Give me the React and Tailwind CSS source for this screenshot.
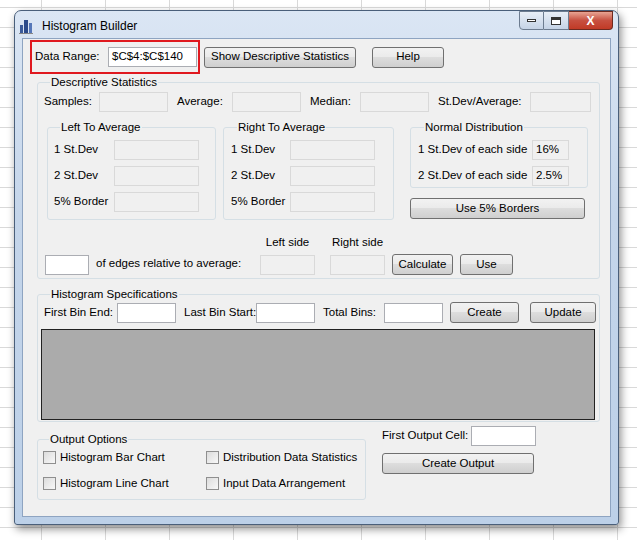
import React from 'react'

const font = "font-[Liberation_Sans,Arial,sans-serif] text-[11.5px] text-black whitespace-nowrap"

function Box({ w, value, white }) {
  return (
    <div className={`h-[20px] ${w} shrink-0 border ${white ? 'bg-white border-[#abadb3]' : 'bg-[#f0f0f0] border-[#d9d9d9]'} px-[3px] flex items-center`}>
      {value}
    </div>
  )
}

function Btn({ w, children }) {
  return (
    <div className={`h-[21px] ${w} border border-[#707070] rounded-[3px] bg-[linear-gradient(#f2f2f2,#ebebeb_45%,#dddddd_50%,#cfcfcf)] flex items-center justify-center`}>
      {children}
    </div>
  )
}

function Group({ title, className, children }) {
  return (
    <fieldset className={`border border-[#d5dfe5] rounded-[3px] ${className}`}>
      <legend className="ml-[6px] px-[1px] leading-[14px]">{title}</legend>
      {children}
    </fieldset>
  )
}

function Row({ label, value, lw = 'w-[60px]', bw = 'w-[85px]' }) {
  return (
    <div className="flex items-center">
      <span className={lw}>{label}</span>
      <Box w={bw} value={value} />
    </div>
  )
}

function Check({ label }) {
  return (
    <div className="flex items-center gap-[4px]">
      <div className="w-[13px] h-[13px] border border-[#8f8f8f] bg-[linear-gradient(135deg,#dcdcdc,#f8f8f8)]" />
      <span>{label}</span>
    </div>
  )
}

export default function App() {
  return (
    <div className={`w-[637px] h-[540px] overflow-hidden bg-white bg-[linear-gradient(to_right,#d9d9d9_1px,transparent_1px),linear-gradient(to_bottom,#d9d9d9_1px,transparent_1px)] bg-[size:64px_20px] bg-[position:41px_7px] pt-[10px] pl-[14px] ${font}`}>
      <div className="w-[605px] h-[515px] rounded-t-[7px] rounded-b-[3px] border border-[#4a5f7a] bg-[linear-gradient(#dbe6f4,#c4d5ea_40%,#bcd0e8)] shadow-[2px_4px_8px_rgba(0,0,0,0.45)] flex flex-col">
        {/* title bar */}
        <div className="h-[27px] flex items-start">
          <div className="flex items-center mt-[6px] ml-[4px] gap-[9px]">
            <svg width="14" height="16" viewBox="0 0 14 16">
              <rect x="1" y="7" width="3" height="9" fill="#3a5a9a" />
              <rect x="5" y="2" width="4" height="14" fill="#2b4a8a" />
              <rect x="10" y="5" width="3" height="11" fill="#5577b8" />
              <rect x="0" y="15" width="14" height="1" fill="#888" />
            </svg>
            <span className="text-[12px]">Histogram Builder</span>
          </div>
          <div className="ml-auto mr-[5px] flex">
            <div className="w-[25px] h-[19px] border border-[#6d7c90] rounded-bl-[4px] bg-[linear-gradient(#e8eef7,#c5d3e6)] flex items-center justify-center">
              <div className="w-[9px] h-[3px] border border-[#333] bg-white" />
            </div>
            <div className="w-[25px] h-[19px] border-y border-r border-[#6d7c90] bg-[linear-gradient(#e8eef7,#c5d3e6)] flex items-center justify-center">
              <div className="w-[10px] h-[8px] border border-[#333] border-t-[3px] bg-white" />
            </div>
            <div className="w-[44px] h-[19px] border-y border-r border-[#6d2a20] rounded-br-[4px] bg-[linear-gradient(#e8a493,#c75040_50%,#c13a26)] flex items-center justify-center text-white font-bold text-[12px]">
              X
            </div>
          </div>
        </div>
        {/* client */}
        <div className="mx-[7px] mb-[7px] flex-1 border border-[#8ea4c1] bg-[#f0f0f0] flex flex-col">
          <div className="flex items-center mt-[1px]">
            <div className="ml-[7px] w-[170px] h-[34px] border-2 border-[#e0191f] flex items-center pl-[3px]">
              <span className="w-[73px]">Data Range:</span>
              <Box w="w-[89px]" white value={<span>$C$4:$C$140</span>} />
            </div>
            <div className="ml-[4px]"><Btn w="w-[152px]">Show Descriptive Statistics</Btn></div>
            <div className="ml-[16px]"><Btn w="w-[72px]">Help</Btn></div>
          </div>

          <Group title="Descriptive Statistics" className="ml-[14px] w-[563px] h-[204px] mt-[1px] pl-[6px]">
            <div className="flex items-center mt-[3px]">
              <span className="w-[55px]">Samples:</span>
              <Box w="w-[69px]" />
              <span className="ml-[9px] w-[55px]">Average:</span>
              <Box w="w-[69px]" />
              <span className="ml-[9px] w-[50px]">Median:</span>
              <Box w="w-[69px]" />
              <span className="ml-[9px] w-[92px]">St.Dev/Average:</span>
              <Box w="w-[61px]" />
            </div>
            <div className="flex items-start mt-[8px]">
              <Group title="Left To Average" className="ml-[3px] w-[169px] h-[100px] pl-[6px] flex flex-col gap-[6px] pt-[6px]">
                <Row label="1 St.Dev" />
                <Row label="2 St.Dev" />
                <Row label="5% Border" />
              </Group>
              <Group title="Right To Average" className="ml-[7px] w-[171px] h-[100px] pl-[7px] flex flex-col gap-[6px] pt-[6px]">
                <Row label="1 St.Dev" lw="w-[59px]" />
                <Row label="2 St.Dev" lw="w-[59px]" />
                <Row label="5% Border" lw="w-[59px]" />
              </Group>
              <div className="ml-[16px] flex flex-col">
                <Group title="Normal Distribution" className="w-[178px] h-[68px] pl-[7px] flex flex-col gap-[6px] pt-[6px]">
                  <Row label="1 St.Dev of each side" value="16%" lw="w-[114px]" bw="w-[37px]" />
                  <Row label="2 St.Dev of each side" value="2.5%" lw="w-[114px]" bw="w-[37px]" />
                </Group>
                <div className="mt-[10px]"><Btn w="w-[175px]">Use 5% Borders</Btn></div>
              </div>
            </div>
            <div className="flex items-end mt-[14px] ml-[1px]">
              <Box w="w-[44px]" white />
              <span className="ml-[7px] mb-[3px] w-[164px]">of edges relative to average:</span>
              <div className="flex flex-col items-center">
                <span className="mb-[4px]">Left side</span>
                <Box w="w-[55px]" />
              </div>
              <div className="ml-[15px] flex flex-col items-center">
                <span className="mb-[4px]">Right side</span>
                <Box w="w-[55px]" />
              </div>
              <div className="ml-[7px]"><Btn w="w-[61px]">Calculate</Btn></div>
              <div className="ml-[7px]"><Btn w="w-[53px]">Use</Btn></div>
            </div>
          </Group>

          <Group title="Histogram Specifications" className="ml-[14px] w-[563px] h-[135px] mt-[8px] pl-[6px]">
            <div className="flex items-center mt-[1px]">
              <span className="w-[73px]">First Bin End:</span>
              <Box w="w-[59px]" white />
              <span className="ml-[8px] w-[72px]">Last Bin Start:</span>
              <Box w="w-[59px]" white />
              <span className="ml-[8px] w-[61px]">Total Bins:</span>
              <Box w="w-[59px]" white />
              <div className="ml-[7px]"><Btn w="w-[69px]">Create</Btn></div>
              <div className="ml-[11px]"><Btn w="w-[66px]">Update</Btn></div>
            </div>
            <div className="mt-[6px] -ml-[3px] w-[554px] h-[91px] bg-[#ababab] border border-[#222]" />
          </Group>

          <div className="flex items-start mt-[10px]">
            <Group title="Output Options" className="ml-[14px] w-[329px] h-[68px] pl-[5px] pt-[3px]">
              <div className="grid grid-cols-[163px_1fr] gap-y-[9px]">
                <Check label="Histogram Bar Chart" />
                <Check label="Distribution Data Statistics" />
                <Check label="Histogram Line Chart" />
                <Check label="Input Data Arrangement" />
              </div>
            </Group>
            <div className="ml-[16px] flex flex-col">
              <div className="flex items-center mt-[-6px]">
                <span className="w-[89px]">First Output Cell:</span>
                <Box w="w-[65px]" white />
              </div>
              <div className="mt-[7px]"><Btn w="w-[152px]">Create Output</Btn></div>
            </div>
          </div>
        </div>
      </div>
    </div>
  )
}
